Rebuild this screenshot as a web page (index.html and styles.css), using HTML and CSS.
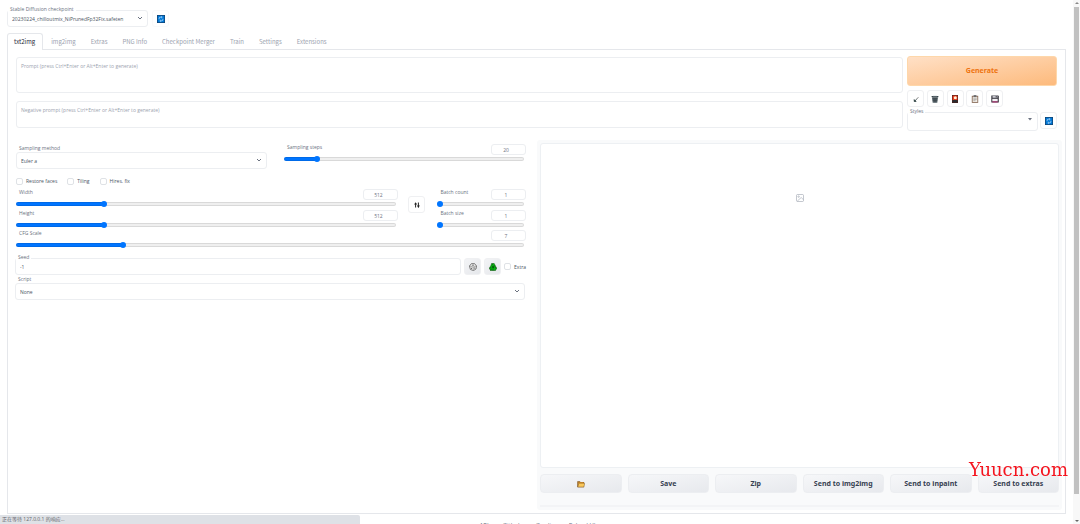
FILE: index.html
```html
<!DOCTYPE html>
<html lang="en">
<head>
<meta charset="utf-8">
<title>Stable Diffusion</title>
<link rel="stylesheet" href="styles.css">
</head>
<body>
<svg class="defs" aria-hidden="true">
  <symbol id="chevron" viewBox="0 0 8 8"><path d="M2 3l2 2 2-2" fill="none" stroke="#6b7280" stroke-width="1"/></symbol>
  <symbol id="refresh" viewBox="0 0 8 8"><rect width="8" height="8" fill="#12406c"/><rect x=".7" y=".7" width="6.6" height="6.6" fill="#0078d7"/><path d="M2.2 4.2V3.1q0-.9.9-.9h1.8M4.3 1.4l.9.8-.9.8M5.8 3.8v1.1q0 .9-.9.9H3.1M3.7 6.6l-.9-.8.9-.8" fill="none" stroke="#c5e4fb" stroke-width=".7"/></symbol>
</svg>

<main class="app">
  <header class="quick">
    <div class="field checkpoint">
      <label class="notch" for="ckpt">Stable Diffusion checkpoint</label>
      <select id="ckpt" class="box"><option>20230224_chilloutmix_NiPrunedFp32Fix.safeten</option></select>
      <svg class="chev"><use href="#chevron"/></svg>
    </div>
    <button class="tool pale" aria-label="Refresh checkpoints"><svg class="ico"><use href="#refresh"/></svg></button>
  </header>

  <nav class="tabs">
    <button class="tab active">txt2img</button>
    <button class="tab">img2img</button>
    <button class="tab">Extras</button>
    <button class="tab">PNG Info</button>
    <button class="tab">Checkpoint Merger</button>
    <button class="tab">Train</button>
    <button class="tab">Settings</button>
    <button class="tab">Extensions</button>
  </nav>

  <section class="panel">
    <div class="top">
      <div class="prompts">
        <textarea class="box prompt" aria-label="Prompt" placeholder="Prompt (press Ctrl+Enter or Alt+Enter to generate)"></textarea>
        <textarea class="box prompt negative" aria-label="Negative prompt" placeholder="Negative prompt (press Ctrl+Enter or Alt+Enter to generate)"></textarea>
      </div>
      <div class="actions">
        <button class="generate">Generate</button>
        <div class="tools">
          <button class="tool" aria-label="Read last parameters"><svg class="ico" viewBox="0 0 8 8"><path d="M6.4 2.200L4.3 4.500" stroke="#666" stroke-width=".8"/><path d="M4.700 4.200L3 5.800M2.200 4.600v1.900h1.900z" stroke="#263b3b" stroke-width=".7" fill="#263b3b"/></svg></button>
          <button class="tool" aria-label="Clear prompt"><svg class="ico" viewBox="0 0 8 8"><path d="M.6 1h6.8v1.2H.6z" fill="#38444b"/><path d="M1 2.2h6l-.7 5.5H1.7z" fill="#59656b"/><path d="M1.5 3.7h5M1.7 5.3h4.6M3 2.4l.3 5M5 2.4l-.3 5" stroke="#303b41" stroke-width=".5"/><path d="M2 1.2h4" stroke="#99a3a8" stroke-width=".5"/></svg></button>
          <button class="tool" aria-label="Extra networks"><svg class="ico" viewBox="0 0 8 8"><path d="M1 0h6v8H1z" fill="#46231f"/><path d="M1.6.6h4.8v4.6H1.6z" fill="#f03a17"/><circle cx="4.3" cy="2.7" r="1.5" fill="#fff0d8"/><path d="M1.6 7.3V5.6Q4 4 6.4 5.6v1.7z" fill="#292b30"/></svg></button>
          <button class="tool" aria-label="Apply styles"><svg class="ico" viewBox="0 0 8 8"><path d="M.8.8h6.4v7H.8z" fill="#80604c"/><path d="M1.6 1.6h4.8V7H1.6z" fill="#f0ece5"/><path d="M2.6.2h2.8v1.6H2.6z" fill="#5c6064"/><path d="M2.3 3.1h3.4M2.3 4.4h3.4M2.3 5.7h2.2" stroke="#777" stroke-width=".5"/></svg></button>
          <button class="tool" aria-label="Save style"><svg class="ico" viewBox="0 0 8 8"><path d="M.3.5h7l.5.7v6.3H.3z" fill="#34343c"/><path d="M1.5.8h5v2h-5z" fill="#c8c8cf"/><path d="M4.7 1h1v1.5h-1z" fill="#34343c"/><path d="M1.3 3.8h5.4v2.6H1.3z" fill="#f4f2f5"/><path d="M1.3 6.4h5.4v1H1.3z" fill="#b52670"/></svg></button>
        </div>
        <div class="styles">
          <div class="field">
            <label class="notch" for="styles">Styles</label>
            <select id="styles" class="box"><option></option></select>
            <svg class="chev" viewBox="0 0 8 8"><path d="M2 2h4L4 4.500z" fill="#6b7280"/></svg>
          </div>
          <button class="tool" aria-label="Refresh styles"><svg class="ico"><use href="#refresh"/></svg></button>
        </div>
      </div>
    </div>

    <div class="columns">
      <div class="settings">
        <div class="sampling">
          <div class="stack">
            <label for="method">Sampling method</label>
            <div class="field">
              <select id="method" class="box"><option>Euler a</option></select>
              <svg class="chev"><use href="#chevron"/></svg>
            </div>
          </div>
          <div class="slider">
            <label for="steps">Sampling steps</label><input class="num" value="20" aria-label="Sampling steps value">
            <input id="steps" type="range" min="1" max="150" value="20" style="--fill:13.400%">
          </div>
        </div>

        <div class="checks">
          <label><input type="checkbox">Restore faces</label>
          <label><input type="checkbox">Tiling</label>
          <label><input type="checkbox">Hires. fix</label>
        </div>

        <div class="dims">
          <div class="sliders">
            <div class="slider">
              <label for="w">Width</label><input class="num" value="512" aria-label="Width value">
              <input id="w" type="range" min="64" max="2048" value="512" style="--fill:23%">
            </div>
            <div class="slider">
              <label for="h">Height</label><input class="num" value="512" aria-label="Height value">
              <input id="h" type="range" min="64" max="2048" value="512" style="--fill:23%">
            </div>
          </div>
          <button class="tool swap" aria-label="Swap width and height"><svg class="ico" viewBox="0 0 8 8"><path d="M2.6 6.500V2M5.4 1.500v5" stroke="#222" stroke-width="1"/><path d="M1.100 3.400l1.500-2.200 1.500 2.200zM3.900 4.600l1.500 2.200 1.500-2.200z" fill="#222"/></svg></button>
          <div class="sliders batch">
            <div class="slider">
              <label for="bc">Batch count</label><input class="num" value="1" aria-label="Batch count value">
              <input id="bc" type="range" min="1" max="100" value="1" style="--fill:0%">
            </div>
            <div class="slider">
              <label for="bs">Batch size</label><input class="num" value="1" aria-label="Batch size value">
              <input id="bs" type="range" min="1" max="8" value="1" style="--fill:0%">
            </div>
          </div>
        </div>

        <div class="slider cfg">
          <label for="cfg">CFG Scale</label><input class="num" value="7" aria-label="CFG Scale value">
          <input id="cfg" type="range" min="1" max="30" step="0.5" value="7" style="--fill:21%">
        </div>

        <div class="seed">
          <div class="field">
            <label class="notch" for="seed">Seed</label>
            <input id="seed" class="box" value="-1">
          </div>
          <button class="tool gray" aria-label="Random seed"><svg class="ico" viewBox="0 0 8 8"><path d="M2.400.6h3.200L7.600 3 7 6 4.500 7.600 1.400 6.500.4 3z" fill="#e4e4e4" stroke="#555" stroke-width=".7"/><path d="M.6 3l3.500 1L7.500 3M4.100 4l.4 3.500" fill="none" stroke="#777" stroke-width=".5"/><circle cx="4" cy="2.200" r=".6" fill="#333"/><circle cx="2.500" cy="5.200" r=".5" fill="#333"/><circle cx="5.700" cy="5" r=".5" fill="#333"/></svg></button>
          <button class="tool gray" aria-label="Reuse seed"><svg class="ico" viewBox="0 0 8 8"><path d="M2.700.5h2.500L6.400 3 7.700 5.200 6.500 7.500H1.500L.3 5.200 1.700 3z" fill="#08b512" stroke="#064d0b" stroke-width=".5"/><path d="M2.700.5l1.400 2M6.400 3l-2 .3M7.700 5.200l-1.700-.5M1.500 7.500l1-1.700M.3 5.200l2-.5M4 5.200v2.300M3.200 3.900L4 3.200l.9 1.100-.7.600z" fill="#063c0b" stroke="#063c0b" stroke-width=".5"/></svg></button>
          <label class="extra"><input type="checkbox">Extra</label>
        </div>

        <div class="stack script">
          <label for="script">Script</label>
          <div class="field">
            <select id="script" class="box"><option>None</option></select>
            <svg class="chev"><use href="#chevron"/></svg>
          </div>
        </div>
      </div>

      <div class="output">
        <div class="gallery">
          <svg class="ico" viewBox="0 0 8 8" fill="none" stroke="#9ca3af" stroke-width=".6"><rect x=".5" y=".5" width="7" height="7" rx="1"/><circle cx="2.600" cy="2.600" r=".7"/><path d="M1.200 7.200L5.200 3.500l2.200 2.200"/></svg>
        </div>
        <div class="sends">
          <button aria-label="Open folder"><svg class="ico" viewBox="0 0 8 8"><path d="M.3 1.300h2.500l.7.8h3.600v5.200H.3z" fill="#8a5a1c"/><path d="M1.200 2.400h5.400v2H1.200z" fill="#f3a533"/><path d="M1.700 3.300h6.100l-1 3.700H.8z" fill="#fbc85a" stroke="#6b4a20" stroke-width=".4"/></svg></button>
          <button>Save</button>
          <button>Zip</button>
          <button>Send to img2img</button>
          <button>Send to inpaint</button>
          <button>Send to extras</button>
        </div>
        <div class="info"></div>
      </div>
    </div>
  </section>

  <footer class="links"><a href="#">API</a><a href="#">Github</a><a href="#">Gradio</a><a href="#">Reload UI</a></footer>
</main>

<div class="scrollbar"><i class="up"></i><div class="thumb"></div><i class="down"></i></div>
<div class="status">正在等待 127.0.0.1 的响应...</div>
<div class="watermark">Yuucn.com</div>
</body>
</html>
```
FILE: styles.css
```css
* { box-sizing: border-box; }

body {
  margin: 0;
  height: 100vh;
  overflow: hidden;
  background: #fff;
  color: #6b7280;
  font: 5px/8px "Open Sans", "Noto Sans CJK SC", sans-serif;
}

button, input, select, textarea { font: inherit; color: inherit; margin: 0; }
button { padding: 0; cursor: pointer; }
.defs { position: absolute; width: 0; height: 0; }
.ico { display: block; width: 8px; height: 8px; }

.app { padding: 10px 14px 0 7px; }

/* Shared controls */
.box {
  display: block;
  width: 100%;
  height: 17px;
  padding: 0 4px;
  border: 1px solid #eceef1;
  border-radius: 3px;
  background: #fff;
  appearance: none;
  outline: none;
  color: #4b5563;
}

.field { position: relative; flex: 1; }
.field > .chev {
  position: absolute;
  right: 4px;
  top: 4px;
  width: 8px;
  height: 8px;
  pointer-events: none;
}
.notch {
  position: absolute;
  left: 1px;
  top: -5px;
  padding: 0 2px;
  background: #fff;
}

.tool {
  display: grid;
  place-items: center;
  flex: none;
  width: 17px;
  height: 17px;
  border: 1px solid #eff0f2;
  border-radius: 3px;
  background: #fff;
}
.tool.pale { border-color: #fafafa; }
.tool.gray { background: linear-gradient(135deg, #f3f4f6, #e5e7eb); }

/* Header and tabs */
.quick { display: flex; gap: 4px; margin-bottom: 6px; }
.checkpoint { flex: 0 0 141px; }

.tabs { display: flex; position: relative; gap: 1px; margin-bottom: -1px; }
.tab {
  height: 17px;
  padding: 0 6px;
  border: 1px solid transparent;
  border-bottom: 0;
  border-radius: 3px 3px 0 0;
  background: none;
  color: #9ca3af;
  font: 6px/8px "Noto Sans CJK SC", sans-serif;
}
.tab.active { padding: 0 7px 0 6px; border-color: #e5e7eb; background: #fff; color: #1f2937; }

.panel { border: 1px solid #e5e7eb; padding: 7px 3px 3px 8px; }

/* Prompt area */
.top { display: flex; gap: 4px; padding-right: 5px; }
.prompts { flex: 887; display: flex; flex-direction: column; gap: 8px; }
.prompt { height: 36px; padding: 4px; resize: none; }
.prompt.negative { height: 27px; }
.prompt::placeholder { color: #9ca3af; opacity: 1; }
.actions { flex: 150; margin-top: -1px; }
.generate {
  display: block;
  width: 100%;
  height: 30px;
  border: 1px solid #fed7aa;
  border-radius: 3px;
  background: linear-gradient(to bottom right, #ffe0c6, #fdba7c);
  color: #ee7411;
  font: bold 7px/10px "Noto Sans", sans-serif;
}
.tools { display: flex; justify-content: space-between; width: 96px; margin: 4px 0 5px; }
.styles { display: flex; gap: 2px; }
.styles .box { height: 19px; }

/* Two-column body */
.columns {
  display: grid;
  grid-template-columns: 510fr 525fr;
  gap: 11px;
  margin-top: 9px;
}
.settings { padding-top: 4px; }
.stack > label { display: block; padding-left: 3px; }

.sampling { display: flex; gap: 17px; margin-bottom: 8px; }
.sampling .stack { flex: 251; }
.sampling .slider { flex: 242; }

.slider { display: grid; grid-template-columns: 1fr 35px; align-content: start; }
.slider > label { padding-left: 3px; line-height: 6px; }
.num {
  width: 35px;
  height: 11px;
  padding: 0 5px 0 0;
  border: 1px solid #eceef1;
  border-radius: 3px;
  background: #fff;
  text-align: center;
  outline: none;
}
.slider > [type="range"] {
  grid-column: 1 / -1;
  width: calc(100% - 2px);
  height: 7px;
  appearance: none;
  background: none;
}
[type="range"]::-webkit-slider-runnable-track {
  height: 4px;
  border-radius: 2px;
  background: linear-gradient(to right, #0075ff var(--fill), #efefef var(--fill));
  box-shadow: inset 0 0 0 1px rgb(0 0 0 / 9%);
}
[type="range"]::-webkit-slider-thumb {
  appearance: none;
  width: 6px;
  height: 6px;
  margin-top: -1px;
  border-radius: 50%;
  background: #0075ff;
}

.checks { display: flex; gap: 10px; margin-bottom: 4px; }
.checks label, .extra { display: flex; align-items: center; gap: 3px; color: #4b5563; }
[type="checkbox"] {
  appearance: none;
  width: 7px;
  height: 7px;
  border: 1px solid #dfe2e6;
  border-radius: 2px;
  background: #fff;
}

.dims { display: flex; align-items: flex-start; gap: 10px; }
.swap { margin-top: 7px; }
.sliders { flex: 380; display: grid; gap: 3px; }
.sliders.batch { flex: 88; margin-left: 2px; }
.cfg { margin-top: 2px; }

.seed { display: flex; align-items: center; gap: 3px; margin: 10px 0 0 -1px; }
.script { margin: 0 1px 0 -1px; }

/* Output */
.output { padding: 3px; border-radius: 3px; background: #f9fafb; }
.gallery {
  display: flex;
  justify-content: center;
  height: 325px;
  padding-top: 50px;
  border: 1px solid #edf0f3;
  border-radius: 3px;
  background: #fff;
}
.sends { display: grid; grid-template-columns: repeat(6, 1fr); gap: 6px; margin-top: 6px; }
.sends button {
  display: grid;
  place-items: center;
  height: 19px;
  border: 1px solid #eceef1;
  border-radius: 4px;
  background: linear-gradient(to bottom right, #f6f7f9, #e7e9ed);
  color: #374151;
  font: bold 7px/10px "Noto Sans", sans-serif;
}
.info { height: 14px; border-bottom: 2px solid #f3f4f6; }

.links { display: flex; justify-content: center; gap: 14px; margin-top: 7px; padding-left: 2px; font-size: 6px; }
.links a { color: #6b7280; text-decoration: none; }

/* Browser chrome */
.scrollbar {
  position: fixed;
  inset: 0 0 0 auto;
  display: grid;
  grid-template-rows: 7px 1fr 30px;
  justify-items: center;
  width: 7px;
  background: #f8f8f8;
}
.thumb { width: 5px; background: #c1c1c1; }
.scrollbar i { border: 2px solid transparent; width: 4px; height: 4px; }
.scrollbar .up { border-bottom-color: #888; }
.scrollbar .down { border-top-color: #666; align-self: end; }
.status {
  position: fixed;
  left: 0;
  bottom: 0;
  width: 33.300%;
  height: 9px;
  padding-left: 2px;
  border-radius: 0 2px 0 0;
  background: #dee1e6;
  color: #5f6368;
}
.watermark {
  position: fixed;
  right: 12px;
  bottom: 44px;
  color: #f5141e;
  font: 18px/20px "DejaVu Serif", serif;
}
```
